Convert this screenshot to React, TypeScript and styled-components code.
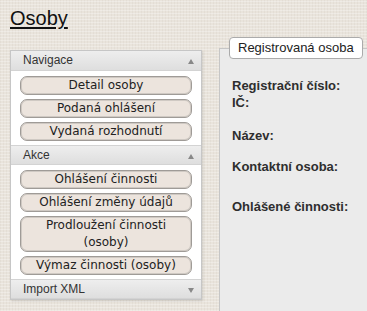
import React from 'react';
import styled, { createGlobalStyle } from 'styled-components';

const GlobalStyle = createGlobalStyle`
  html, body {
    margin: 0;
    padding: 0;
    overflow: hidden;
  }
  body {
    background-color: #e9e4dc;
    background-image:
      repeating-linear-gradient(0deg, rgba(255, 255, 255, 0.28) 0 1px, transparent 1px 3px),
      repeating-linear-gradient(90deg, rgba(120, 100, 80, 0.05) 0 1px, transparent 1px 3px);
    font-family: "Liberation Sans", Arial, sans-serif;
  }
`;

const Page = styled.div`
  width: 367px;
  height: 311px;
  padding: 6px 0 0 10px;
  box-sizing: border-box;
  overflow: hidden;
`;

const Title = styled.h1`
  margin: 0;
  font-family: "Liberation Sans", Arial, sans-serif;
  font-size: 20px;
  font-weight: normal;
  line-height: 24px;
  color: #111;
  text-decoration: underline;
  text-underline-offset: 2px;
`;

const Columns = styled.div`
  display: flex;
  align-items: flex-start;
  margin-top: 7px;
`;

const SidePanel = styled.div`
  width: 192px;
  box-sizing: border-box;
  margin-top: 13px;
  border: 1px solid #c6c6c6;
  background: #fff;
  box-shadow: 1px 1px 2px rgba(0, 0, 0, 0.12);
`;

const SectionHeader = styled.div<{ $first?: boolean; $open?: boolean }>`
  position: relative;
  height: 20px;
  box-sizing: border-box;
  padding-left: 12px;
  line-height: 19px;
  font-family: "Liberation Sans", Arial, sans-serif;
  font-size: 12px;
  color: #333;
  background: linear-gradient(#eeeeee, #dedede);
  border-top: ${({ $first }) => ($first ? 'none' : '1px solid #d3d3d3')};
  border-bottom: 1px solid #d3d3d3;

  &::after {
    content: '';
    position: absolute;
    right: 7px;
    top: 8px;
    border-left: 3px solid transparent;
    border-right: 3px solid transparent;
    ${({ $open }) =>
      $open ? 'border-bottom: 5px solid #888;' : 'border-top: 5px solid #888;'}
  }
`;

const SectionBody = styled.div`
  display: flex;
  flex-direction: column;
  gap: 4px;
  padding: 5px 9px 4px 9px;
`;

const NavButton = styled.button`
  display: block;
  width: 100%;
  margin: 0;
  padding: 0 6px;
  border: 1px solid #9f9b97;
  border-radius: 7px;
  box-shadow: inset 0 0 0 1px #cfc9c3;
  background: #ece4dd;
  font-family: "DejaVu Sans", Verdana, sans-serif;
  font-size: 12px;
  line-height: 17px;
  color: #222;
  text-align: center;
`;

const Fieldset = styled.fieldset`
  flex: 1;
  min-height: 290px;
  margin: 0 -30px 0 17px;
  padding: 18px 12px 0 12px;
  border: 1px solid #c6c6c6;
  background: #ebebeb;
`;

const Legend = styled.legend`
  margin-left: -3px;
  padding: 2px 8px 3px;
  border: 1px solid #ababab;
  border-radius: 4px;
  background: #fff;
  font-family: "Liberation Sans", Arial, sans-serif;
  font-size: 13px;
  line-height: 15px;
  color: #222;
`;

const Label = styled.div<{ $space: number }>`
  margin-top: ${({ $space }) => $space}px;
  font-family: "Liberation Sans", Arial, sans-serif;
  font-size: 13px;
  font-weight: bold;
  line-height: 17px;
  color: #2e2e2e;
`;

const navItems = ['Detail osoby', 'Podaná ohlášení', 'Vydaná rozhodnutí'];
const actionItems = [
  'Ohlášení činnosti',
  'Ohlášení změny údajů',
  'Prodloužení činnosti (osoby)',
  'Výmaz činnosti (osoby)',
];

const fields = [
  { text: 'Registrační číslo:', space: 0 },
  { text: 'IČ:', space: 0 },
  { text: 'Název:', space: 16 },
  { text: 'Kontaktní osoba:', space: 14 },
  { text: 'Ohlášené činnosti:', space: 23 },
];

const App: React.FC = () => {
  return (
    <>
      <GlobalStyle />
      <Page>
        <Title>Osoby</Title>
        <Columns>
          <SidePanel>
            <SectionHeader $first $open>Navigace</SectionHeader>
            <SectionBody>
              {navItems.map((item) => (
                <NavButton key={item}>{item}</NavButton>
              ))}
            </SectionBody>
            <SectionHeader $open>Akce</SectionHeader>
            <SectionBody>
              {actionItems.map((item) => (
                <NavButton key={item}>{item}</NavButton>
              ))}
            </SectionBody>
            <SectionHeader>Import XML</SectionHeader>
          </SidePanel>
          <Fieldset>
            <Legend>Registrovaná osoba</Legend>
            {fields.map((f) => (
              <Label key={f.text} $space={f.space}>
                {f.text}
              </Label>
            ))}
          </Fieldset>
        </Columns>
      </Page>
    </>
  );
};

export default App;
